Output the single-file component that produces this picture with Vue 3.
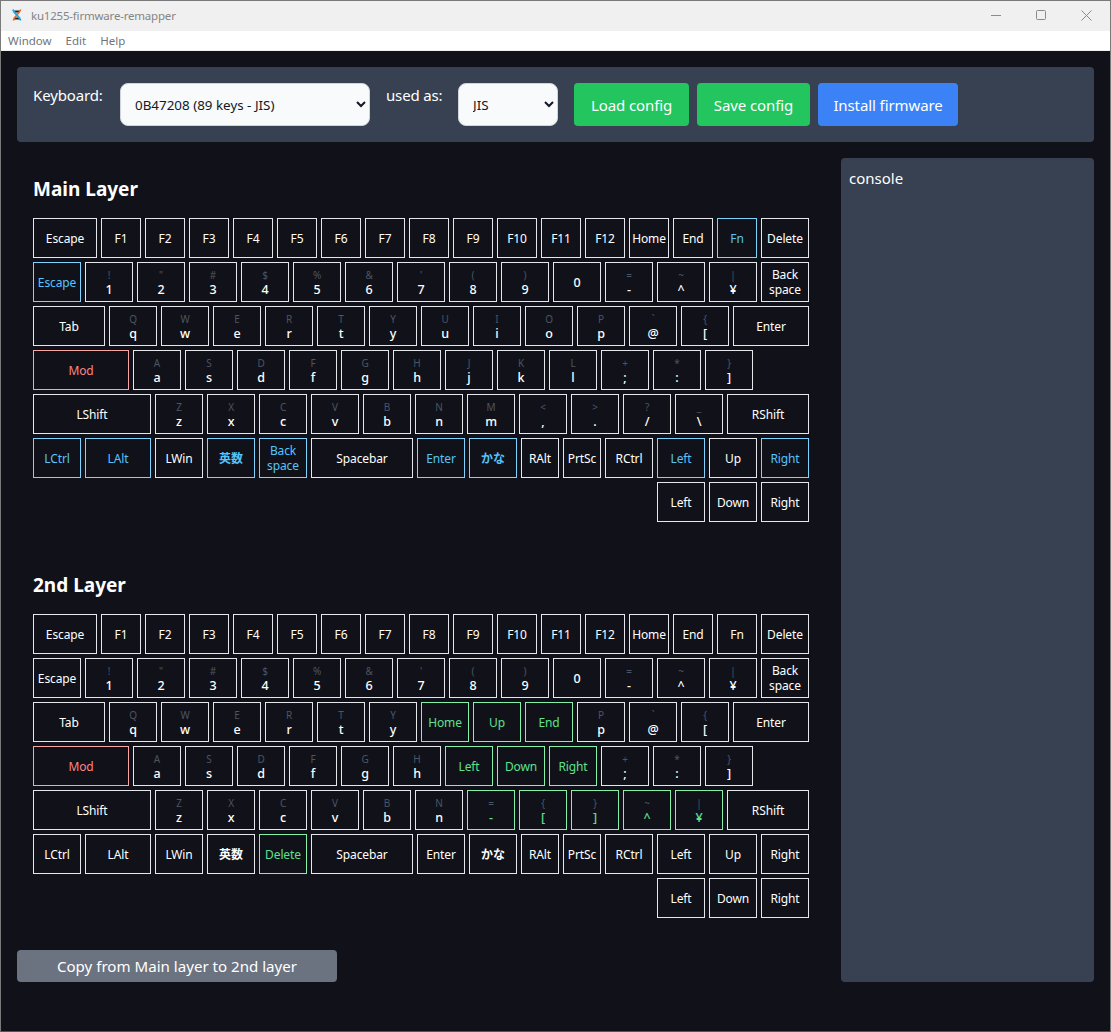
<script setup>
// each key: [width, label, upper label, accent]
const k = (w, label, upper = "", accent = "") => ({ w, label, upper, accent });

const letters = (chars) => chars.map(([up, low]) => k(48, low, up));

const makeLayer = (o = {}) => [
  [
    k(64, "Escape"),
    ...["F1", "F2", "F3", "F4", "F5", "F6", "F7", "F8", "F9", "F10", "F11", "F12", "Home", "End"].map((f) => k(40, f)),
    k(40, "Fn", "", o.fn),
    k(48, "Delete"),
  ],
  [
    k(48, "Escape", "", o.esc),
    ...letters([["!", "1"], ['"', "2"], ["#", "3"], ["$", "4"], ["%", "5"], ["&", "6"], ["'", "7"], ["(", "8"], [")", "9"], ["", "0"], ["=", "-"], ["~", "^"], ["|", "¥"]]),
    k(48, "Back\nspace"),
  ],
  [
    k(72, "Tab"),
    ...letters([["Q", "q"], ["W", "w"], ["E", "e"], ["R", "r"], ["T", "t"], ["Y", "y"]]),
    ...(o.nav
      ? [k(48, "Home", "", "green"), k(48, "Up", "", "green"), k(48, "End", "", "green")]
      : letters([["U", "u"], ["I", "i"], ["O", "o"]])),
    ...letters([["P", "p"], ["`", "@"], ["{", "["]]),
    k(76, "Enter"),
  ],
  [
    k(96, "Mod", "", "red"),
    ...letters([["A", "a"], ["S", "s"], ["D", "d"], ["F", "f"], ["G", "g"], ["H", "h"]]),
    ...(o.nav
      ? [k(48, "Left", "", "green"), k(48, "Down", "", "green"), k(48, "Right", "", "green")]
      : letters([["J", "j"], ["K", "k"], ["L", "l"]])),
    ...letters([["+", ";"], ["*", ":"], ["}", "]"]]),
  ],
  [
    k(118, "LShift"),
    ...letters([["Z", "z"], ["X", "x"], ["C", "c"], ["V", "v"], ["B", "b"], ["N", "n"]]),
    ...(o.nav
      ? [k(48, "-", "=", "green"), k(48, "[", "{", "green"), k(48, "]", "}", "green"), k(48, "^", "~", "green"), k(48, "¥", "|", "green")]
      : letters([["M", "m"], ["<", ","], [">", "."], ["?", "/"], ["_", "\\"]])),
    k(82, "RShift"),
  ],
  [
    k(48, "LCtrl", "", o.mods),
    k(66, "LAlt", "", o.mods),
    k(48, "LWin"),
    k(48, "英数", "", o.mods),
    o.nav ? k(48, "Delete", "", "green") : k(48, "Back\nspace", "", o.mods),
    k(102, "Spacebar"),
    k(48, "Enter", "", o.mods),
    k(48, "かな", "", o.mods),
    k(38, "RAlt"),
    k(38, "PrtSc"),
    k(48, "RCtrl"),
    k(48, "Left", "", o.mods),
    k(48, "Up"),
    k(48, "Right", "", o.mods),
  ],
  [k(48, "Left"), k(48, "Down"), k(48, "Right")],
];

const layers = [
  { title: "Main Layer", rows: makeLayer({ fn: "blue", esc: "blue", mods: "blue" }) },
  { title: "2nd Layer", rows: makeLayer({ nav: true }) },
];

const isCjk = (label) => label === "英数" || label === "かな";
</script>

<template>
  <div class="window">
    <div class="titlebar">
      <svg class="appicon" width="10" height="12" viewBox="0 0 10 12">
        <path d="M2.5 2.5h5M2 9.5h6" stroke="#222" stroke-width="2" />
        <path d="M8.5 0.5C8 4 2 7.5 1.5 11.5" stroke="#e8642a" stroke-width="1.6" fill="none" />
        <path d="M1 0.5C1.5 4 8 7.5 8.5 11.5" stroke="#1fa8e0" stroke-width="1.8" fill="none" />
      </svg>
      <span class="apptitle">ku1255-firmware-remapper</span>
      <div class="controls">
        <svg width="11" height="11" viewBox="0 0 11 11"><path d="M1 5.5h10" stroke="#8a8a8a" /></svg>
        <svg width="11" height="11" viewBox="0 0 11 11"><rect x="0.5" y="0.5" width="9" height="9" rx="1" fill="none" stroke="#8a8a8a" /></svg>
        <svg width="11" height="11" viewBox="0 0 11 11"><path d="M0.5 0.5l10 10M10.5 0.5l-10 10" stroke="#8a8a8a" fill="none" /></svg>
      </div>
    </div>
    <div class="menubar">
      <span>Window</span>
      <span>Edit</span>
      <span>Help</span>
    </div>
    <div class="content">
      <div class="toolbar">
        <label class="lbl lbl-kb">Keyboard:</label>
        <select class="sel sel-kb">
          <option>0B47208 (89 keys - JIS)</option>
        </select>
        <label class="lbl lbl-as">used as:</label>
        <select class="sel sel-as">
          <option>JIS</option>
        </select>
        <button class="btn green load">Load config</button>
        <button class="btn green save">Save config</button>
        <button class="btn blue install">Install firmware</button>
      </div>
      <div class="main">
        <div class="editor">
          <section v-for="layer in layers" :key="layer.title" class="layer">
            <h2>{{ layer.title }}</h2>
            <div class="kbd">
              <div v-for="(row, i) in layer.rows" :key="i" class="row">
                <div
                  v-for="(key, j) in row"
                  :key="j"
                  class="key"
                  :class="key.accent"
                  :style="{ width: key.w + 'px' }"
                >
                  <span v-if="key.upper" class="up">{{ key.upper }}</span>
                  <span class="lo" :class="{ two: key.label.length === 1, cjk: isCjk(key.label) }">{{ key.label }}</span>
                </div>
              </div>
            </div>
          </section>
          <button class="copy">Copy from Main layer to 2nd layer</button>
        </div>
        <aside class="console">console</aside>
      </div>
    </div>
  </div>
</template>

<style>
body {
  background: #111219;
}
</style>

<style scoped>
.window {
  box-sizing: border-box;
  height: 1032px;
  border: 1px solid #7a7a7a;
  border-bottom-color: #555;
  font-family: "Noto Sans", "Noto Sans CJK JP", sans-serif;
  display: flex;
  flex-direction: column;
  overflow: hidden;
}
.titlebar {
  height: 30px;
  box-sizing: border-box;
  background: #f0f0f0;
  display: flex;
  align-items: center;
  padding-left: 11px;
  padding-bottom: 2px;
  color: #858585;
  font-size: 11.5px;
  letter-spacing: -0.2px;
}
.appicon {
  margin-right: 9px;
}
.controls {
  margin-left: auto;
  display: flex;
  gap: 34.5px;
  padding-right: 18px;
  padding-top: 1px;
}
.menubar {
  height: 20px;
  background: #fff;
  border-bottom: 1px solid #f0f0f0;
  box-sizing: border-box;
  display: flex;
  align-items: center;
  gap: 14px;
  padding-left: 7px;
  font-size: 11.5px;
  color: #70757c;
}
.content {
  flex: 1;
  background: #111219;
  padding: 16px;
  color: #fff;
}
.toolbar {
  height: 75px;
  box-sizing: border-box;
  background: #374151;
  border-radius: 4px;
  padding: 16px;
  display: flex;
  align-items: flex-start;
}
.lbl {
  font-size: 15px;
  line-height: 25px;
  margin-right: 16px;
  letter-spacing: -0.15px;
  white-space: nowrap;
}
.lbl-kb {
  width: 71px;
}
.lbl-as {
  width: 56px;
}
.sel {
  height: 43px;
  box-sizing: border-box;
  background: #f9fafb;
  border: 1px solid #d1d5db;
  border-radius: 8px;
  font-family: inherit;
  font-size: 13.4px;
  color: #111827;
  padding: 0 8px 0 10px;
  margin-right: 16px;
}
.sel-kb {
  width: 250px;
}
.sel-as {
  width: 100px;
}
.btn {
  height: 43px;
  border: none;
  border-radius: 4px;
  color: #fff;
  font-family: inherit;
  font-size: 15px;
  letter-spacing: -0.1px;
  margin-right: 8px;
  padding: 0;
}
.btn.green {
  background: #22c55e;
}
.btn.blue {
  background: #3b82f6;
}
.load {
  width: 115px;
}
.save {
  width: 113px;
}
.install {
  width: 140px;
}
.main {
  display: flex;
  margin-top: 16px;
  gap: 16px;
}
.editor {
  width: 808px;
}
.layer {
  padding-left: 16px;
  height: 396px;
}
.layer h2 {
  margin: 0;
  padding-top: 19px;
  height: 60px;
  box-sizing: border-box;
  font-size: 19px;
  line-height: 25px;
  font-weight: 700;
}
.kbd {
  width: 776px;
  display: flex;
  flex-direction: column;
  gap: 4px;
}
.row {
  display: flex;
  gap: 4px;
}
.row:last-child {
  justify-content: flex-end;
}
.key {
  height: 40px;
  box-sizing: border-box;
  border: 1px solid #e5e7eb;
  display: flex;
  flex-direction: column;
  align-items: center;
  justify-content: center;
  font-size: 12px;
  letter-spacing: -0.12px;
  line-height: 15px;
  text-align: center;
  white-space: pre-line;
  flex: none;
}
.up {
  font-size: 10px;
  line-height: 15px;
  color: #4b5563;
  height: 14px;
}
.lo.two {
  font-weight: 500;
  font-size: 12.5px;
}
.lo.cjk {
  font-weight: 700;
}
.key.blue {
  border-color: #7dd3fc;
  color: #56c4f9;
}
.key.green {
  border-color: #86efac;
  color: #5fe08e;
}
.key.red {
  border-color: #fca5a5;
  color: #fb8585;
}
.copy {
  display: block;
  margin-top: 0;
  width: 320px;
  height: 32px;
  border: none;
  border-radius: 4px;
  background: #6b7280;
  color: #fff;
  font-family: inherit;
  font-size: 15.1px;
  padding: 0;
}
.console {
  width: 253px;
  height: 824px;
  box-sizing: border-box;
  background: #374151;
  border-radius: 4px;
  padding: 9px 8px;
  font-size: 15px;
  line-height: 22px;
}
</style>
